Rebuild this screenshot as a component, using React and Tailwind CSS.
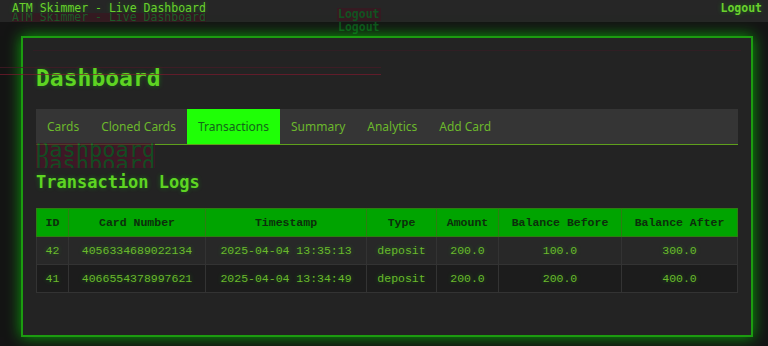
import React from "react";

const TABS = ["Cards", "Cloned Cards", "Transactions", "Summary", "Analytics", "Add Card"];

const COLS = [
  { label: "ID", w: "w-[32px]" },
  { label: "Card Number", w: "w-[137px]" },
  { label: "Timestamp", w: "w-[161px]" },
  { label: "Type", w: "w-[70px]" },
  { label: "Amount", w: "w-[62px]" },
  { label: "Balance Before", w: "w-[123px]" },
  { label: "Balance After", w: "" },
];

const ROWS = [
  ["42", "4056334689022134", "2025-04-04 13:35:13", "deposit", "200.0", "100.0", "300.0"],
  ["41", "4066554378997621", "2025-04-04 13:34:49", "deposit", "200.0", "200.0", "400.0"],
];

const glow = "[text-shadow:0_0_5px_rgba(0,255,0,0.3)]";

export default function App() {
  return (
    <div className="relative min-h-screen overflow-hidden bg-[#141414] font-['DejaVu_Sans_Mono',monospace]">
      {/* top bar */}
      <nav className="flex h-[22px] items-start justify-between bg-[#262626] pl-3 pr-[6px] pt-[1px]">
        <span className={`text-[11.5px] leading-[14px] text-[#6ad02c] ${glow}`}>ATM Skimmer - Live Dashboard</span>
        <span className={`text-[11.5px] font-bold leading-[14px] text-[#6ad02c] ${glow}`}>Logout</span>
      </nav>

      {/* glitch ghosts */}
      <div className="pointer-events-none absolute left-3 top-[13px] h-[9px] overflow-hidden text-[11.5px] leading-[9px] text-[#17702a] opacity-70">
        <span className="bg-[#3a1520]">ATM Skimmer - Live Dashboard</span>
      </div>
      <div className="pointer-events-none absolute left-[337px] top-[8px] text-[11.5px] font-bold leading-[13px] text-[#0d5e20] opacity-80">
        <div className="bg-[#3a1822] px-[1px]">Logout</div>
        <div className="px-[1px]">Logout</div>
      </div>

      <main className="pl-[21px] pr-[15px] pt-[14px] pb-[10px]">
        <div className="relative border-2 border-[#1c9c10] bg-[#232323] px-[13px] pt-[25px] pb-[42px] shadow-[0_0_14px_rgba(0,255,0,0.6)]">
          {/* glitch lines */}
          <div className="pointer-events-none absolute left-[-24px] right-[370px] top-[29px] h-[1px] bg-[#4a1a26] opacity-70" />
          <div className="pointer-events-none absolute left-[-24px] right-[370px] top-[36px] h-[1px] bg-[#7a1a2e] opacity-70" />
          <div className="pointer-events-none absolute left-[10px] right-[10px] top-[12px] h-[1px] bg-[#3a1a24] opacity-60" />

          <h1 className={`text-[23px] font-bold leading-[30px] text-[#5ed422] ${glow}`}>Dashboard</h1>

          <div className="mt-[16px] flex h-[36px] border-b border-[#5fa01c] bg-[#353535] font-['Noto_Sans',sans-serif] text-[12px]">
            {TABS.map((t) => (
              <div
                key={t}
                className={`flex items-center px-[11px] ${
                  t === "Transactions" ? "bg-[#1fff06] text-[#14661a]" : "text-[#6cb82c]"
                }`}
              >
                {t}
              </div>
            ))}
          </div>

          <div className="relative">
            <div className="pointer-events-none absolute left-0 top-[-2px] text-[22px] leading-[14px] text-[#0b5e22] opacity-70">
              <div className="h-[14px] overflow-hidden bg-[#4a1428]">Dashboard</div>
              <div className="h-[11px] overflow-hidden bg-[#4a1428]">Dashboard</div>
            </div>
            <h2 className={`pt-[26px] text-[17px] font-bold leading-[22px] text-[#5ed422] ${glow}`}>Transaction Logs</h2>
          </div>

          <table className="mt-[15px] w-full table-fixed border-collapse font-['Liberation_Mono',monospace] text-[11.5px]">
            <thead>
              <tr className="h-[28px] bg-[#00a400]">
                {COLS.map((c) => (
                  <th key={c.label} className={`${c.w} border border-[#2e7d12] text-center font-bold text-[#0c2e0c]`}>
                    {c.label}
                  </th>
                ))}
              </tr>
            </thead>
            <tbody>
              {ROWS.map((r, i) => (
                <tr key={r[0]} className={`h-[28px] ${i % 2 === 0 ? "bg-[#282828]" : "bg-[#1c1c1c]"}`}>
                  {r.map((v, j) => (
                    <td key={j} className={`border border-[#333333] text-center text-[#6cb82c] ${glow}`}>
                      {v}
                    </td>
                  ))}
                </tr>
              ))}
            </tbody>
          </table>
        </div>
      </main>
    </div>
  );
}
